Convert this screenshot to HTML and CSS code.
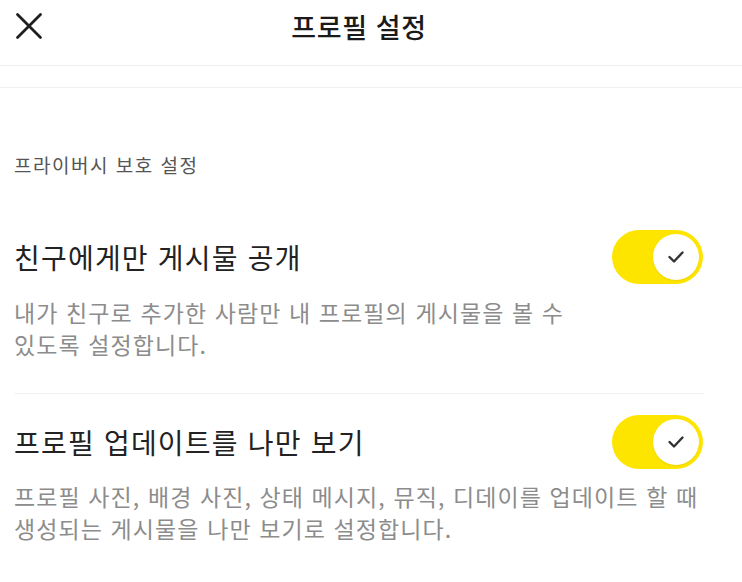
FILE: index.html
```html
<!DOCTYPE html>
<html lang="ko">
<head>
    <meta charset="UTF-8">
    <meta name="viewport" content="width=device-width, initial-scale=1.0">
    <title>프로필 설정</title>
    <link rel="stylesheet" href="styles.css">
</head>
<body>
    <header class="topbar">
        <button class="btn-close" aria-label="닫기">
            <svg width="28" height="28" viewBox="0 0 28 28">
                <path d="M2.5 2.5 L25.5 25.5 M25.5 2.5 L2.5 25.5" stroke="#1f1f1f" stroke-width="2.8" stroke-linecap="round" fill="none"/>
            </svg>
        </button>
        <h1>프로필 설정</h1>
        <span></span>
    </header>
    <div class="divider-band"></div>

    <section class="settings">
        <h2 class="section-label">프라이버시 보호 설정</h2>

        <div class="setting-item">
            <div class="setting-row">
                <span class="setting-title">친구에게만 게시물 공개</span>
                <label class="toggle">
                    <input type="checkbox" checked>
                    <span class="knob">
                        <svg width="18" height="14" viewBox="0 0 18 14"><path d="M2.5 7 L7 11.5 L15.5 2.5" stroke="#333" stroke-width="2.4" fill="none" stroke-linecap="round" stroke-linejoin="round"/></svg>
                    </span>
                </label>
            </div>
            <p class="setting-desc">내가 친구로 추가한 사람만 내 프로필의 게시물을 볼 수<br>있도록 설정합니다.</p>
        </div>

        <div class="setting-item">
            <div class="setting-row">
                <span class="setting-title">프로필 업데이트를 나만 보기</span>
                <label class="toggle">
                    <input type="checkbox" checked>
                    <span class="knob">
                        <svg width="18" height="14" viewBox="0 0 18 14"><path d="M2.5 7 L7 11.5 L15.5 2.5" stroke="#333" stroke-width="2.4" fill="none" stroke-linecap="round" stroke-linejoin="round"/></svg>
                    </span>
                </label>
            </div>
            <p class="setting-desc">프로필 사진, 배경 사진, 상태 메시지, 뮤직, 디데이를 업데이트 할 때<br>생성되는 게시물을 나만 보기로 설정합니다.</p>
        </div>
    </section>
</body>
</html>
```

FILE: styles.css
```css
body { margin: 0; background: #fff; font-family: "Noto Sans CJK KR", "Noto Sans", sans-serif; color: #1e1e1e; }
.topbar { display: grid; grid-template-columns: 1fr auto 1fr; align-items: center; height: 52px; padding: 0 38px 13px 14px; border-bottom: 1px solid #eeeeee; }
.topbar h1 { margin: 0; font-size: 27px; font-weight: 500; color: #1a1a1a; letter-spacing: 0.6px; }
.btn-close { background: none; border: none; padding: 0; margin-left: 1px; width: 28px; height: 28px; cursor: pointer; justify-self: start; }
.btn-close svg { display: block; }
.divider-band { height: 21px; border-bottom: 1px solid #f0f0f0; }
.settings { padding: 65px 38px 0 14px; }
.section-label { margin: 0 0 31px; font-size: 19px; font-weight: 400; line-height: 24px; color: #555; letter-spacing: 1.5px; }
.setting-item { padding: 22px 0 33px; border-bottom: 1px solid #f2f2f2; }
.setting-item:last-child { border-bottom: none; padding-top: 21px; }
.setting-row { display: flex; align-items: center; justify-content: space-between; }
.setting-title { font-size: 28px; line-height: 40px; color: #222; letter-spacing: 1.2px; }
.setting-desc { margin: 12px 0 0; font-size: 23px; line-height: 32px; color: #8c8c8c; letter-spacing: 1.1px; }
.setting-item:last-child .setting-desc { margin-top: 11px; }
.toggle { position: relative; display: block; width: 91px; height: 54px; border-radius: 27px; background: #fee500; margin-right: 1px; cursor: pointer; }
.toggle input { display: none; }
.knob { position: absolute; top: 4px; right: 4px; width: 46px; height: 46px; border-radius: 50%; background: #fff; box-shadow: 0 1px 2px rgba(0,0,0,0.08); display: flex; align-items: center; justify-content: center; }
.knob svg { display: block; }
```
